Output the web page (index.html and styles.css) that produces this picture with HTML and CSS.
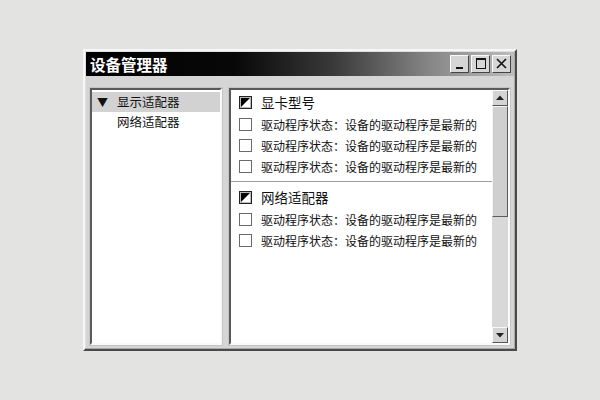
FILE: index.html
```html
<!DOCTYPE html>
<html lang="zh">
<head>
<meta charset="utf-8">
<link rel="stylesheet" href="styles.css">
</head>
<body>
<div class="window">
  <div class="titlebar">
    <span class="title">设备管理器</span>
    <div class="tbtns">
      <div class="tbtn"><svg width="19" height="18" viewBox="0 0 19 18"><rect x="6" y="12" width="7" height="2" fill="#111"/></svg></div>
      <div class="tbtn"><svg width="19" height="18" viewBox="0 0 19 18"><rect x="5.5" y="3.5" width="9" height="10" fill="none" stroke="#111" stroke-width="1"/><rect x="5" y="3" width="10" height="2" fill="#111"/></svg></div>
      <div class="tbtn"><svg width="19" height="18" viewBox="0 0 19 18"><path d="M5 4 L14 13 M14 4 L5 13" stroke="#111" stroke-width="1.6"/></svg></div>
    </div>
  </div>
  <div class="body">
    <div class="pane left">
      <div class="tree-item selected"><span class="arrow">▼</span>显示适配器</div>
      <div class="tree-item child">网络适配器</div>
    </div>
    <div class="pane right">
      <div class="list">
        <div class="section">
          <div class="row head"><span class="cb checked"><svg width="13" height="13" viewBox="0 0 13 13"><path d="M2 2 H11 L2 11 Z" fill="#000"/></svg></span>显卡型号</div>
          <div class="row"><span class="cb"></span>驱动程序状态：设备的驱动程序是最新的</div>
          <div class="row"><span class="cb"></span>驱动程序状态：设备的驱动程序是最新的</div>
          <div class="row"><span class="cb"></span>驱动程序状态：设备的驱动程序是最新的</div>
        </div>
        <div class="section second">
          <div class="row head"><span class="cb checked"><svg width="13" height="13" viewBox="0 0 13 13"><path d="M2 2 H11 L2 11 Z" fill="#000"/></svg></span>网络适配器</div>
          <div class="row"><span class="cb"></span>驱动程序状态：设备的驱动程序是最新的</div>
          <div class="row"><span class="cb"></span>驱动程序状态：设备的驱动程序是最新的</div>
        </div>
      </div>
      <div class="scrollbar">
        <div class="sbtn"><svg width="16" height="16" viewBox="0 0 16 16"><path d="M4 10 L8 5.5 L12 10 Z" fill="#222"/></svg></div>
        <div class="thumb"></div>
        <div class="track"></div>
        <div class="sbtn"><svg width="16" height="16" viewBox="0 0 16 16"><path d="M4 6 L12 6 L8 10.5 Z" fill="#222"/></svg></div>
      </div>
    </div>
  </div>
</div>
</body>
</html>
```

FILE: styles.css
```css
html, body {
  margin: 0;
  padding: 0;
}
body {
  width: 600px;
  height: 400px;
  background: #e3e3e1;
  font-family: "Noto Sans CJK SC", "Noto Sans", sans-serif;
  color: #111;
  padding: 49px 0 0 83px;
  box-sizing: border-box;
  overflow: hidden;
}
.window {
  width: 434px;
  height: 302px;
  box-sizing: border-box;
  background: #d5d5d5;
  border: 2px solid;
  border-color: #f6f6f6 #4a4a4a #4a4a4a #f6f6f6;
  box-shadow: inset -1px -1px 0 #a8a8a8, inset 1px 1px 0 #e0e0e0;
  padding: 1px;
  display: flex;
  flex-direction: column;
}
.titlebar {
  height: 24px;
  flex: none;
  display: flex;
  align-items: center;
  justify-content: space-between;
  background: linear-gradient(to right, #000 0%, #080808 35%, #3a3a3a 58%, #858585 80%, #bdbdbd 100%);
  padding: 0 3px 0 4px;
}
.title {
  color: #fff;
  font-size: 15.5px;
  font-weight: 700;
  line-height: 24px;
}
.tbtns {
  display: flex;
  gap: 2px;
}
.tbtn {
  width: 19px;
  height: 18px;
  box-sizing: border-box;
  background: #d6d6d6;
  border: 1px solid;
  border-color: #fafafa #444 #444 #fafafa;
  display: flex;
  align-items: center;
  justify-content: center;
}
.tbtn svg {
  display: block;
  flex: none;
}
.body {
  flex: 1;
  display: flex;
  gap: 7px;
  padding: 12px 4px 3px 4px;
}
.pane {
  background: #fff;
  box-sizing: border-box;
  border: 2px solid;
  border-color: #5a5a5a #fafafa #fafafa #5a5a5a;
  box-shadow: 0 0 0 1px #c4c4c4;
}
.left {
  width: 132px;
  flex: none;
  padding: 2px 0 0 0;
}
.tree-item {
  height: 20px;
  line-height: 20px;
  font-size: 12.5px;
  padding-left: 25px;
  position: relative;
}
.tree-item.selected {
  background: #d2d2d2;
}
.arrow {
  position: absolute;
  left: 5px;
  top: 0;
  font-size: 11px;
}
.right {
  flex: 1;
  display: flex;
}
.list {
  flex: 1;
}
.section {
  padding-bottom: 4px;
  border-bottom: 1px solid #a0a0a0;
  box-shadow: 0 1px 0 #fff;
}
.section.second {
  border-bottom: none;
  box-shadow: none;
  padding-top: 3px;
}
.row {
  height: 21px;
  display: flex;
  align-items: center;
  font-size: 12px;
  padding-left: 8px;
  white-space: nowrap;
}
.row.head {
  height: 24px;
  font-size: 13.5px;
}
.cb {
  width: 13px;
  height: 13px;
  box-sizing: border-box;
  border: 1px solid #6a6a6a;
  background: #fff;
  margin-right: 9px;
  flex: none;
  position: relative;
}
.cb.checked {
  border: 1px solid #222;
  box-shadow: inset 0 0 0 1px #bbb;
}
.cb svg {
  position: absolute;
  left: -1px;
  top: -1px;
}
.scrollbar {
  width: 16px;
  flex: none;
  display: flex;
  flex-direction: column;
  background: #d8d8d8;
}
.sbtn {
  width: 16px;
  height: 16px;
  box-sizing: border-box;
  background: #d4d4d4;
  border: 1px solid;
  border-color: #fafafa #555 #555 #fafafa;
  flex: none;
}
.sbtn svg {
  display: block;
  margin: -1px;
}
.thumb {
  height: 111px;
  flex: none;
  box-sizing: border-box;
  background: #cfcfcf;
  border: 1px solid;
  border-color: #f4f4f4 #5a5a5a #5a5a5a #f4f4f4;
}
.track {
  flex: 1;
}
```
